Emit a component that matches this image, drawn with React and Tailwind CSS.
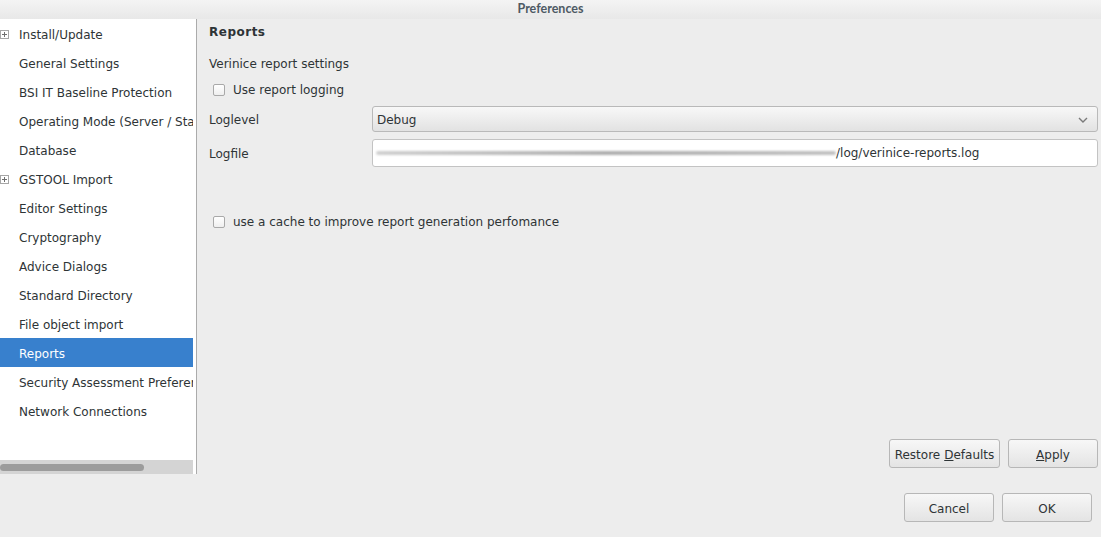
import React from "react";

const items = [
  { label: "Install/Update", expand: true },
  { label: "General Settings" },
  { label: "BSI IT Baseline Protection" },
  { label: "Operating Mode (Server / Standalone)" },
  { label: "Database" },
  { label: "GSTOOL Import", expand: true },
  { label: "Editor Settings" },
  { label: "Cryptography" },
  { label: "Advice Dialogs" },
  { label: "Standard Directory" },
  { label: "File object import" },
  { label: "Reports", selected: true },
  { label: "Security Assessment Preferences" },
  { label: "Network Connections" },
];

const Expander = () => (
  <svg width="9" height="9" viewBox="0 0 9 9" className="absolute left-[0px] top-[11px]">
    <rect x="0.5" y="0.5" width="8" height="8" fill="white" stroke="#a6a6a6" />
    <path d="M2 4.5H7M4.5 2V7" stroke="#6f6f6f" strokeWidth="1" />
  </svg>
);

const Checkbox = () => (
  <span className="w-[12px] h-[12px] rounded-[2px] border border-[#a9a9a9] bg-gradient-to-b from-white to-[#efefef] shrink-0" />
);

const Button = ({ children, className = "" }) => (
  <button
    className={
      "h-[29px] w-[90px] pt-[2px] rounded-[3px] border border-[#b7b7b7] bg-gradient-to-b from-[#f7f7f7] to-[#e4e4e4] text-[12px] text-[#2e3436] flex items-center justify-center " +
      className
    }
  >
    {children}
  </button>
);

export default function App() {
  return (
    <div
      className="w-[1101px] h-[537px] bg-[#ededed] flex flex-col text-[12px] text-[#2e3436] overflow-hidden"
      style={{ fontFamily: '"DejaVu Sans", sans-serif' }}
    >
      {/* Title bar */}
      <div className="h-[19px] bg-gradient-to-b from-[#f4f4f4] to-[#e8e8e8] flex items-center justify-center">
        <span
          className="font-bold text-[12.5px] text-[#4e5a64]"
          style={{ fontFamily: "Lato, sans-serif" }}
        >
          Preferences
        </span>
      </div>

      <div className="flex h-[455px]">
        {/* Tree */}
        <div className="w-[197px] bg-white border-r border-[#ababab] flex flex-col">
          <div className="flex-1 overflow-hidden mr-[3px]">
            {items.map((it) => (
              <div
                key={it.label}
                className={
                  "relative h-[29px] flex items-center pt-[2px] pl-[19px] whitespace-nowrap overflow-hidden " +
                  (it.selected ? "bg-[#3880cd] text-white" : "")
                }
              >
                {it.expand && <Expander />}
                {it.label}
              </div>
            ))}
          </div>
          <div className="h-[14px] mr-[3px] bg-[#d4d4d4] flex items-center">
            <div className="h-[7px] w-[144px] rounded-full bg-[#9c9c9c]" />
          </div>
        </div>

        {/* Page */}
        <div className="flex-1 flex flex-col pl-[12px] pr-[3px]">
          <div className="h-[24px] pt-[2px] flex items-center font-bold tracking-[0.5px]">Reports</div>
          <div className="h-[24px] pt-[2px] mt-[8px] flex items-center">Verinice report settings</div>
          <div className="h-[24px] pt-[2px] mt-[2px] flex items-center gap-[8px] pl-[4px]">
            <Checkbox />
            <span>Use report logging</span>
          </div>
          <div className="flex items-center mt-[5px] h-[26px]">
            <span className="w-[163px] shrink-0 pt-[2px]">Loglevel</span>
            <div className="flex-1 h-[26px] pt-[1px] rounded-[3px] border border-[#b9b9b9] bg-gradient-to-b from-[#f8f8f8] to-[#e2e2e2] flex items-center justify-between pl-[4px] pr-[9px]">
              <span>Debug</span>
              <svg width="10" height="6" viewBox="0 0 10 6">
                <path d="M1 1L5 5L9 1" fill="none" stroke="#7a7a7a" strokeWidth="1.4" />
              </svg>
            </div>
          </div>
          <div className="flex items-center mt-[7px] h-[28px]">
            <span className="w-[163px] shrink-0 pt-[2px]">Logfile</span>
            <div className="flex-1 h-[28px] rounded-[3px] border border-[#c3c3c3] bg-white flex items-center pl-[3px] overflow-hidden">
              <div className="w-[460px] h-[6px] flex items-center shrink-0">
                <div className="w-full h-[4px] rounded-full bg-gradient-to-r from-[#c4c4c4] via-[#9a9a9a] to-[#b2b2b2] blur-[1px] opacity-80" />
              </div>
              <span>/log/verinice-reports.log</span>
            </div>
          </div>
          <div className="h-[24px] mt-[43px] flex items-center gap-[8px] pl-[4px]">
            <Checkbox />
            <span>use a cache to improve report generation perfomance</span>
          </div>
          <div className="flex-1" />
          <div className="flex justify-end gap-[8px] pb-[6px]">
            <Button className="w-[111px]">
              Restore <span className="underline ml-[4px]">D</span>efaults
            </Button>
            <Button>
              <span className="underline">A</span>pply
            </Button>
          </div>
        </div>
      </div>

      {/* Dialog buttons */}
      <div className="flex justify-end gap-[8px] pr-[9px] pt-[19px]">
        <Button>Cancel</Button>
        <Button>OK</Button>
      </div>
    </div>
  );
}
